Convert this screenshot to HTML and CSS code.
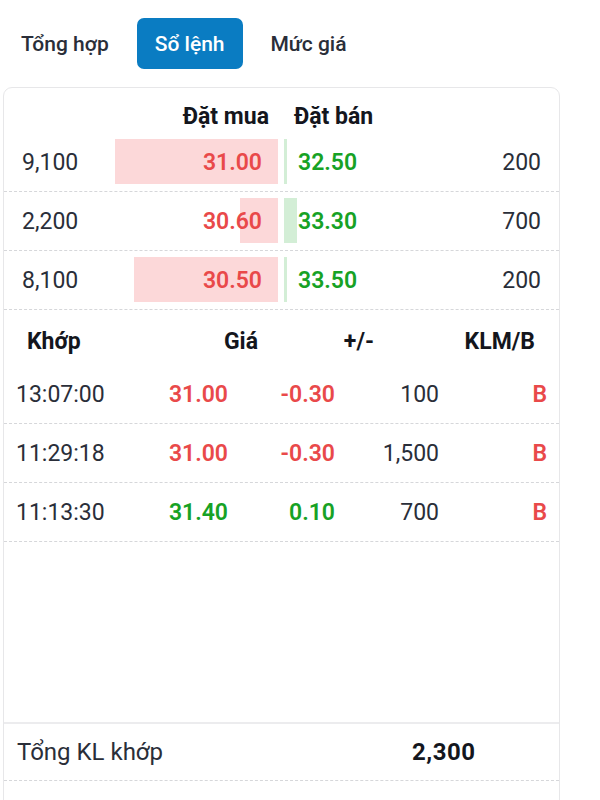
FILE: index.html
```html
<!DOCTYPE html>
<html lang="vi">
<head>
<meta charset="utf-8">
<title>Sổ lệnh</title>
<link rel="stylesheet" href="styles.css">
</head>
<body>
<div class="page">
  <nav class="tabs">
    <button class="tab">Tổng hợp</button>
    <button class="tab active">Sổ lệnh</button>
    <button class="tab">Mức giá</button>
  </nav>

  <section class="card">
    <div class="ob-head">
      <div class="ob-head-bid">Đặt mua</div>
      <div class="ob-head-ask">Đặt bán</div>
    </div>

    <div class="ob-row">
      <div class="bid"><span class="bar bid-bar" style="width:163px"></span><span class="vol">9,100</span><span class="px red">31.00</span></div>
      <div class="ask"><span class="bar ask-bar" style="width:3px"></span><span class="px green">32.50</span><span class="vol">200</span></div>
    </div>
    <div class="ob-row">
      <div class="bid"><span class="bar bid-bar" style="width:38px"></span><span class="vol">2,200</span><span class="px red">30.60</span></div>
      <div class="ask"><span class="bar ask-bar" style="width:13px"></span><span class="px green">33.30</span><span class="vol">700</span></div>
    </div>
    <div class="ob-row">
      <div class="bid"><span class="bar bid-bar" style="width:144px"></span><span class="vol">8,100</span><span class="px red">30.50</span></div>
      <div class="ask"><span class="bar ask-bar" style="width:3px"></span><span class="px green">33.50</span><span class="vol">200</span></div>
    </div>

    <div class="trades">
      <div class="tr-head">
        <span>Khớp</span>
        <span class="r">Giá</span>
        <span class="r">+/-</span>
        <span class="r">KLM/B</span>
      </div>
      <div class="tr-row">
        <span>13:07:00</span>
        <span class="r px red">31.00</span>
        <span class="r px red">-0.30</span>
        <span class="r">100</span>
        <span class="r px red">B</span>
      </div>
      <div class="tr-row">
        <span>11:29:18</span>
        <span class="r px red">31.00</span>
        <span class="r px red">-0.30</span>
        <span class="r">1,500</span>
        <span class="r px red">B</span>
      </div>
      <div class="tr-row">
        <span>11:13:30</span>
        <span class="r px green">31.40</span>
        <span class="r px green">0.10</span>
        <span class="r">700</span>
        <span class="r px red">B</span>
      </div>
    </div>

    <div class="summary">
      <span>Tổng KL khớp</span>
      <span class="sum-val">2,300</span>
    </div>
  </section>
</div>
</body>
</html>
```

FILE: styles.css
```css
html, body {
  margin: 0;
  height: 800px;
  overflow: hidden;
  background: #ffffff;
}

body {
  font-family: Roboto, "Liberation Sans", sans-serif;
  color: #2a2e39;
}

.page {
  padding: 18px 0 0 3px;
}

.tabs {
  display: flex;
  gap: 10px;
}

.tab {
  height: 51px;
  padding: 0 18px;
  border: 0;
  border-radius: 7px;
  background: transparent;
  font-family: inherit;
  font-size: 21px;
  font-weight: 500;
  color: #2a2e39;
}

.tab.active {
  background: #0a7cc2;
  color: #ffffff;
}

.card {
  box-sizing: border-box;
  width: 557px;
  margin-top: 18px;
  border: 1px solid #e7e7e9;
  border-radius: 9px;
  padding-bottom: 80px;
  font-size: 23px;
}

.ob-head {
  display: grid;
  grid-template-columns: 274px 275px;
  column-gap: 6px;
  height: 45px;
  padding-top: 17px;
  box-sizing: border-box;
  line-height: 24px;
  font-weight: 700;
  color: #14161d;
}

.ob-head-bid {
  text-align: right;
  padding-right: 9px;
}

.ob-head-ask {
  padding-left: 10px;
}

.ob-row {
  display: grid;
  grid-template-columns: 274px 275px;
  column-gap: 6px;
  height: 59px;
  box-sizing: border-box;
  border-bottom: 1px dashed #d6d7da;
}

.bid, .ask {
  position: relative;
  display: flex;
  align-items: center;
  justify-content: space-between;
}

.bid {
  padding: 0 16px 0 18px;
}

.ask {
  padding: 0 18px 0 14px;
}

.bar {
  position: absolute;
  top: 6px;
  bottom: 7px;
}

.bid-bar {
  right: 0;
  background: #fcd8d9;
}

.ask-bar {
  left: 0;
  background: #d3eed6;
}

.vol, .px {
  position: relative;
}

.px {
  font-weight: 600;
}

.red {
  color: #e9494a;
}

.green {
  color: #17a225;
}

.trades {
  height: 412px;
}

.tr-head {
  display: grid;
  grid-template-columns: 100px 131px 116px 1fr;
  height: 55px;
  box-sizing: border-box;
  padding: 20px 24px 0 23px;
  line-height: 24px;
  font-weight: 700;
  color: #14161d;
}

.tr-row {
  display: grid;
  grid-template-columns: 100px 112px 107px 104px 1fr;
  align-items: center;
  height: 59px;
  box-sizing: border-box;
  padding: 0 12px 0 12px;
  border-bottom: 1px dashed #d6d7da;
}

.r {
  text-align: right;
}

.summary {
  display: grid;
  grid-template-columns: 395px 1fr;
  align-items: center;
  height: 59px;
  box-sizing: border-box;
  padding-left: 13px;
  border-top: 2px solid #ececee;
  border-bottom: 1px dashed #d6d7da;
  font-size: 24px;
}

.sum-val {
  font-weight: 700;
  color: #14161d;
  letter-spacing: 0.5px;
}
```
